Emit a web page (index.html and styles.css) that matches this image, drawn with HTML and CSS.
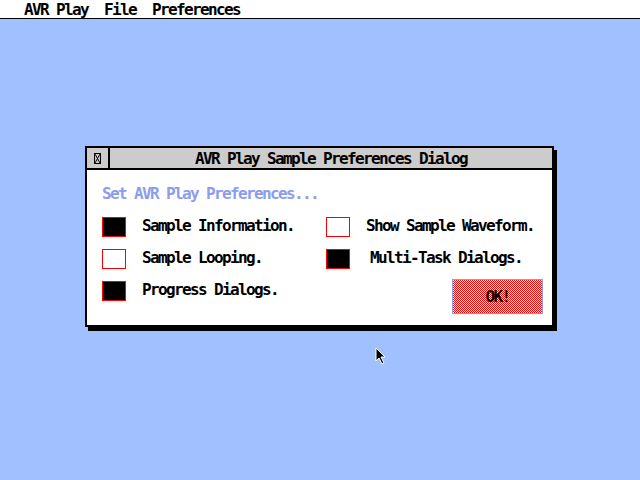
FILE: index.html
```html
<!DOCTYPE html>
<html lang="en">
<head>
  <meta charset="UTF-8">
  <title>AVR Play</title>
  <link rel="stylesheet" href="styles.css">
</head>
<body>
  <header class="menubar">
    <span class="menu-item">AVR Play</span>
    <span class="menu-item">File</span>
    <span class="menu-item">Preferences</span>
  </header>

  <main class="desktop">
    <div class="dialog">
      <div class="titlebar">
        <div class="closebox">
          <svg width="7" height="11" viewBox="0 0 7 11">
            <path d="M0 0.5H7M0 10.5H7M0.5 0V11M6.5 0V11M1 1L6 10M6 1L1 10" stroke="#000" stroke-width="1" fill="none"/>
          </svg>
        </div>
        <div class="title">AVR Play Sample Preferences Dialog</div>
      </div>

      <div class="dialog-body">
        <p class="heading">Set AVR Play Preferences...</p>
        <div class="options">
          <label class="option"><span class="check on"></span><span class="label">Sample Information.</span></label>
          <label class="option"><span class="check"></span><span class="label">Show Sample Waveform.</span></label>
          <label class="option"><span class="check"></span><span class="label">Sample Looping.</span></label>
          <label class="option wide"><span class="check on"></span><span class="label">Multi-Task Dialogs.</span></label>
          <label class="option"><span class="check on"></span><span class="label">Progress Dialogs.</span></label>
          <button class="ok-btn">OK!</button>
        </div>
      </div>
    </div>
  </main>

  <svg class="cursor" width="12" height="18" viewBox="0 0 12 18">
    <polygon points="1,1 1,14 4,11 7,17 9,16 6,10 10,10" fill="#000" stroke="#fff" stroke-width="1"/>
  </svg>
</body>
</html>
```

FILE: styles.css
```css
html, body {
  height: 100%;
  margin: 0;
  padding: 0;
  overflow: hidden;
}

body {
  position: relative;
  display: flex;
  flex-direction: column;
  background-color: #a0c0ff;
  font-family: "DejaVu Sans Mono", "Liberation Mono", monospace;
  font-size: 16px;
  font-weight: bold;
  line-height: 16px;
  letter-spacing: -1.63px;
  color: #000;
}

.menubar {
  display: flex;
  background-color: #fff;
  padding: 2px 0 0 16px;
  height: 16px;
  border-bottom: 1px solid #000;
}

.menu-item {
  padding: 0 8px;
}

.desktop {
  flex: 1;
  position: relative;
}

.dialog {
  position: absolute;
  top: 127px;
  left: 85px;
  width: 465px;
  background-color: #fff;
  border: 2px solid #000;
  box-shadow: 3px 4px 0 #000;
}

.titlebar {
  display: flex;
  height: 20px;
  background-color: #cccccc;
  border-bottom: 2px solid #000;
}

.closebox {
  width: 21px;
  border-right: 2px solid #000;
  display: flex;
  justify-content: center;
  align-items: center;
}

.closebox svg {
  display: block;
}

.title {
  flex: 1;
  text-align: center;
  padding-top: 3px;
}

.dialog-body {
  padding: 15px 9px 11px 15px;
}

.heading {
  margin: 0 0 15px 0;
  padding-top: 1px;
  color: #8c9cf0;
}

.options {
  display: grid;
  grid-template-columns: 224px 1fr;
  row-gap: 12px;
}

.option {
  display: flex;
  align-items: flex-start;
  gap: 16px;
  height: 20px;
}

.option.wide {
  gap: 20px;
}

.label {
  padding-top: 1px;
}

.check {
  width: 22px;
  height: 18px;
  border: 1px solid #ff0000;
  background-color: #fff;
  flex-shrink: 0;
}

.check.on {
  background-color: #000;
}

.ok-btn {
  justify-self: end;
  margin-top: -2px;
  width: 91px;
  height: 35px;
  padding: 0;
  border: 1px solid #8c9cf0;
  background: repeating-conic-gradient(#ff0000 0 25%, #ffffff 0 50%) 0 0 / 2px 2px;
  font-family: inherit;
  font-size: 16px;
  font-weight: bold;
  letter-spacing: -1.63px;
  color: #000;
}

.cursor {
  position: absolute;
  left: 375px;
  top: 347px;
}
```
